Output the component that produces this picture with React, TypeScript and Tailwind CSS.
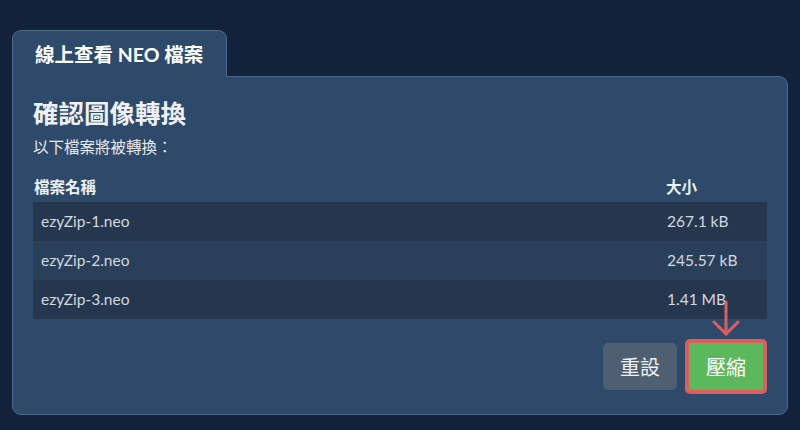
const files = [
  { name: "ezyZip-1.neo", size: "267.1 kB" },
  { name: "ezyZip-2.neo", size: "245.57 kB" },
  { name: "ezyZip-3.neo", size: "1.41 MB" },
];

export default function App() {
  return (
    <div
      className="w-[800px] h-[430px] bg-[#11223a] pt-[30px] px-[12px] text-[#e6ebf0]"
      style={{ fontFamily: 'Lato, "Noto Sans CJK TC", sans-serif' }}
    >
      {/* tab */}
      <div className="flex">
        <div className="w-[215px] h-[47px] bg-[#2d4a6a] border border-b-0 border-[#4d6a8a] rounded-t-[9px] pl-[22px] pt-[9px] relative z-10 -mb-px">
          <span className="text-[19.5px] font-bold text-white">線上查看 NEO 檔案</span>
        </div>
      </div>

      {/* panel */}
      <div className="h-[339px] bg-[#2d4a6a] border border-[#4d6a8a] rounded-b-[9px] rounded-tr-[9px] px-[20px] pt-[20px]">
        <h2 className="text-[25.5px] font-bold leading-[32px] text-[#eef1f4]">確認圖像轉換</h2>
        <p className="text-[15.5px] mt-[7px] leading-[22px] text-[#e6ebf0]">以下檔案將被轉換：</p>

        <div className="mt-[18px]">
          <div className="flex text-[15.5px] font-bold h-[26px] items-start px-[1px] text-[#eef1f4]">
            <div className="flex-1">檔案名稱</div>
            <div className="w-[100px]">大小</div>
          </div>
          {files.map((f, i) => (
            <div
              key={f.name}
              className={`flex items-center h-[39px] text-[15.5px] text-[#d3d9e0] ${
                i % 2 === 0 ? "bg-[#24374f]" : "bg-[#2a4059]"
              }`}
            >
              <div className="flex-1 pl-[8px]">{f.name}</div>
              <div className="w-[100px]">{f.size}</div>
            </div>
          ))}
        </div>

        <div className="flex justify-end items-center gap-[8px] mt-[20px]">
          <button className="w-[74px] h-[47px] rounded-[5px] bg-[#4e5f71] text-[20px] text-[#eef1f4]">
            重設
          </button>
          <div className="relative">
            <button className="w-[82px] h-[55px] rounded-[5px] bg-[#5cb85c] border-[4px] border-[#df5e5b] text-[20px] text-white">
              壓縮
            </button>
            <svg
              className="absolute left-1/2 -translate-x-1/2 bottom-[calc(100%+2px)]"
              width="30"
              height="37"
              viewBox="0 0 30 37"
              fill="none"
              stroke="#df5e5b"
              strokeWidth="3"
              strokeLinecap="round"
              strokeLinejoin="round"
            >
              <path d="M15 2 V34" />
              <path d="M3 22 L15 34 L27 22" />
            </svg>
          </div>
        </div>
      </div>
    </div>
  );
}
